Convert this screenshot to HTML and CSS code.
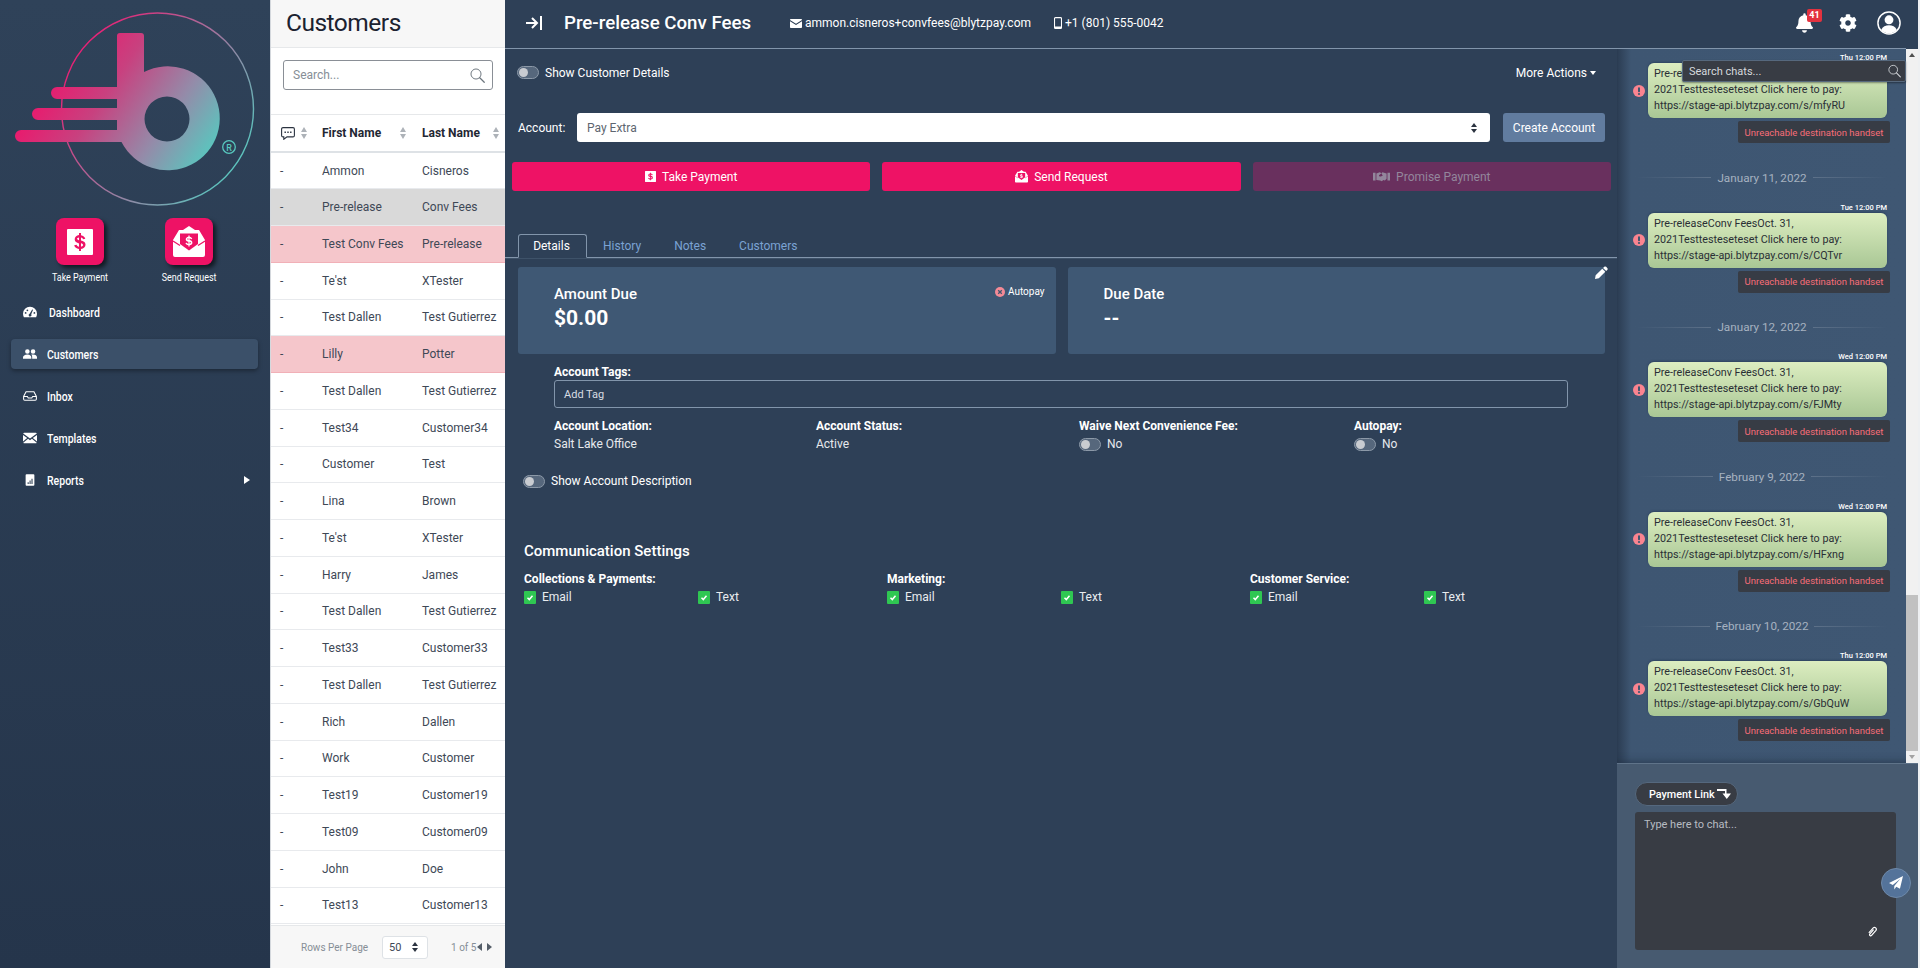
FILE: index.html
```html
<!DOCTYPE html>
<html lang="en">
<head>
<meta charset="utf-8">
<title>Customers</title>
<link rel="stylesheet" href="styles.css">
</head>
<body>
<svg class="defs" width="0" height="0" aria-hidden="true">
  <defs>
    <linearGradient id="logoFill" gradientUnits="userSpaceOnUse" x1="50" y1="60" x2="205" y2="165">
      <stop offset="0" stop-color="#f0126a"/><stop offset=".35" stop-color="#c8417f"/><stop offset=".7" stop-color="#948ba9"/><stop offset="1" stop-color="#58c8bf"/>
    </linearGradient>
    <linearGradient id="logoRing" gradientUnits="userSpaceOnUse" x1="70" y1="50" x2="240" y2="170">
      <stop offset="0" stop-color="#ee1a72"/><stop offset=".5" stop-color="#a5709b"/><stop offset="1" stop-color="#58c8bf"/>
    </linearGradient>
    <symbol id="i-dollar" viewBox="0 0 26 26">
      <path fill="currentColor" fill-rule="evenodd" d="M1 0h24a1 1 0 0 1 1 1v24a1 1 0 0 1-1 1H1a1 1 0 0 1-1-1V1a1 1 0 0 1 1-1zm11 4v2.100c-2.600.4-4.300 2-4.300 4.200 0 2.600 2 3.500 4.300 4.100v3.300c-1.200-.2-2.100-.9-2.400-2l-2.400.6c.5 2 2.300 3.400 4.800 3.700V22h2v-2c2.700-.3 4.500-1.900 4.500-4.200 0-2.800-2.200-3.700-4.500-4.300V8.500c1 .2 1.700.8 2 1.800l2.300-.6c-.5-1.800-2.100-3.200-4.300-3.500V4h-2zm0 4.500v2.800c-1.200-.4-1.900-.8-1.900-1.500 0-.6.7-1.100 1.900-1.300zm2 5.700c1.300.4 2.100.9 2.100 1.700 0 .8-.8 1.400-2.100 1.600v-3.300z"/>
    </symbol>
    <symbol id="i-envdollar" viewBox="0 0 32 32">
      <path fill="currentColor" d="M16 0l6 4h4l3 5 3 5v15a2 2 0 0 1-2 2H2a2 2 0 0 1-2-2V14l3-5 3-5h4z"/>
      <path fill="#ee1265" d="M7 7.500h18V18l-9 6.500L7 18z"/>
      <path fill="none" stroke="#ee1265" stroke-width="1.200" d="M0 15l7 4.500M32 15l-7 4.500"/>
      <path fill="currentColor" fill-rule="evenodd" transform="translate(7.940 6.940) scale(.62)" d="M12 4v2.100c-2.600.4-4.300 2-4.300 4.200 0 2.600 2 3.500 4.300 4.100v3.300c-1.200-.2-2.100-.9-2.400-2l-2.400.6c.5 2 2.300 3.400 4.800 3.700V22h2v-2c2.700-.3 4.500-1.900 4.500-4.200 0-2.800-2.200-3.700-4.500-4.300V8.500c1 .2 1.700.8 2 1.800l2.300-.6c-.5-1.800-2.100-3.200-4.300-3.500V4h-2zm0 4.500v2.800c-1.200-.4-1.900-.8-1.900-1.500 0-.6.7-1.100 1.900-1.300zm2 5.700c1.300.4 2.100.9 2.100 1.700 0 .8-.8 1.400-2.100 1.600v-3.300z"/>
    </symbol>
    <symbol id="i-search" viewBox="0 0 20 20">
      <circle cx="8" cy="8" r="6.700" fill="none" stroke="currentColor" stroke-width="1.300"/>
      <path d="M13 13l6 6" stroke="currentColor" stroke-width="1.600" stroke-linecap="round"/>
    </symbol>
    <symbol id="i-alert" viewBox="0 0 12 12">
      <circle cx="6" cy="6" r="6" fill="#fb8490"/>
      <rect x="5" y="2.300" width="2" height="5" rx="1" fill="#3f566f"/>
      <circle cx="6" cy="9" r="1.100" fill="#3f566f"/>
    </symbol>
    <symbol id="i-handshake" viewBox="0 0 20 14">
      <path fill="currentColor" d="M0 2h3v9H0zM17 2h3v9h-3zM4 3l4-1.500 2 1-3 2.500c0 1.500 1.500 2 3 1l2-1.500 4 4.500-2 2-2-.5-1.500 1.500-2-1L4 10.500zM11 1.500l5 1.500v6l-1 .5-4-5-1-2z"/>
    </symbol>
    <symbol id="i-check" viewBox="0 0 12 13">
      <rect width="12" height="13" rx="1" fill="#2fc752"/>
      <path d="M3.500 6.800l1.800 1.800 3.200-3.800" fill="none" stroke="#fff" stroke-width="1.500"/>
    </symbol>
  </defs>
</svg>

<div class="app">
  <aside class="sidebar">
    <svg class="logo" viewBox="0 0 270 215" width="270" height="215" role="img" aria-label="Blytzpay logo">
      <circle cx="157.500" cy="109" r="96" fill="none" stroke="url(#logoRing)" stroke-width="1.400"/>
      <path fill="url(#logoFill)" fill-rule="evenodd" d="M120 33h21a3 3 0 0 1 3 3v36a52 52 0 1 1-22.500 70H21a6 6 0 0 1 0-12h96v-10H38a6 6 0 0 1 0-12h79V99H57a6 6 0 0 1 0-12h60V36a3 3 0 0 1 3-3zM167 96.500a22.500 22.500 0 1 0 0 45 22.500 22.500 0 0 0 0-45z"/>
      <circle cx="229" cy="147" r="6.300" fill="none" stroke="#58c8bf" stroke-width="1.300"/>
      <text x="229" y="150.500" class="logo-r">R</text>
    </svg>
    <div class="quick">
      <a class="quick-item">
        <span class="tile"><svg class="tile-icon" width="26" height="26"><use href="#i-dollar"/></svg></span>
        <span class="quick-label">Take Payment</span>
      </a>
      <a class="quick-item">
        <span class="tile"><svg class="tile-icon" width="32" height="32"><use href="#i-envdollar"/></svg></span>
        <span class="quick-label">Send Request</span>
      </a>
    </div>
    <nav class="nav">
      <a class="nav-item">
        <svg class="nav-icon" viewBox="0 0 16 12"><path fill="currentColor" fill-rule="evenodd" d="M8 0a8 8 0 0 1 8 8c0 1.500-.4 2.800-1 4H1C.4 10.800 0 9.500 0 8a8 8 0 0 1 8-8zm2.500 3L7.600 8a1.600 1.600 0 1 0 1.800.6L11.500 3.500zM3 6a1 1 0 1 0 0 2 1 1 0 0 0 0-2zm2-3a1 1 0 1 0 0 2 1 1 0 0 0 0-2zm8 3a1 1 0 1 0 0 2 1 1 0 0 0 0-2z"/></svg>
        <span class="nav-text first">Dashboard</span>
      </a>
      <a class="nav-item active">
        <svg class="nav-icon" viewBox="0 0 16 11"><path fill="currentColor" d="M5 0a2.600 2.600 0 1 1 0 5.200A2.600 2.600 0 0 1 5 0zm6.500 0a2.600 2.600 0 1 1 0 5.200 2.600 2.600 0 0 1 0-5.200zM0 9.500C0 7.500 2 6 5 6s4.500 1.500 4.500 3.500V11H0zM10.500 11V9c0-1.200-.4-2.100-1-2.800.6-.2 1.300-.2 2-.2 2.700 0 4.500 1.400 4.500 3.300V11z"/></svg>
        <span class="nav-text">Customers</span>
      </a>
      <a class="nav-item">
        <svg class="nav-icon" viewBox="0 0 16 11"><path fill="none" stroke="currentColor" stroke-width="1.200" d="M3.500.7h9L15.300 6v3a1.300 1.300 0 0 1-1.300 1.300H2A1.300 1.300 0 0 1 .7 9V6zM.7 6h4.300l1 1.700h4L11 6h4.300"/></svg>
        <span class="nav-text">Inbox</span>
      </a>
      <a class="nav-item">
        <svg class="nav-icon" viewBox="0 0 16 12"><path fill="currentColor" d="M1.500 0h13c.6 0 1.100.3 1.300.8L8 6.500.2.800C.4.300.9 0 1.500 0zM0 2.500l4.800 3.600L0 10zM16 2.500V10l-4.800-3.900zM5.800 6.900 8 8.500l2.200-1.600 5.500 4.500c-.3.400-.7.600-1.200.6h-13c-.5 0-.9-.2-1.200-.6z"/></svg>
        <span class="nav-text">Templates</span>
      </a>
      <a class="nav-item">
        <svg class="nav-icon" viewBox="0 0 16 13"><path fill="currentColor" fill-rule="evenodd" d="M4 0h8a1 1 0 0 1 1 1v11a1 1 0 0 1-1 1H4a1 1 0 0 1-1-1V1a1 1 0 0 1 1-1zm1.300 9v2h1.200V9zm2.200-2v4h1.200V7zm2.200-2v6h1.200V5z"/></svg>
        <span class="nav-text">Reports</span>
        <span class="nav-arrow"></span>
      </a>
    </nav>
  </aside>

  <section class="list">
    <h1 class="list-title">Customers</h1>
    <div class="list-search">
      <div class="search-box">
        <span class="search-ph">Search...</span>
        <svg class="search-ico" width="15" height="15"><use href="#i-search"/></svg>
      </div>
    </div>
    <table class="cust">
      <thead>
        <tr>
          <th class="c-msg">
            <div class="th-in">
              <svg class="msg-ico" viewBox="0 0 14 13"><path fill="none" stroke="currentColor" stroke-width="1.100" d="M2 .6h10A1.400 1.400 0 0 1 13.400 2v6.500A1.400 1.400 0 0 1 12 9.900H6L2.800 12.300V9.900H2A1.400 1.400 0 0 1 .6 8.500V2A1.400 1.400 0 0 1 2 .6z"/><path fill="currentColor" d="M3.500 4.500h1.400v1.400H3.500zM6.300 4.500h1.400v1.400H6.300zM9.100 4.500h1.400v1.400H9.100z"/></svg>
              <span class="sort"></span>
            </div>
          </th>
          <th class="c-first"><div class="th-in"><span>First Name</span><span class="sort"></span></div></th>
          <th class="c-last"><div class="th-in"><span>Last Name</span><span class="sort"></span></div></th>
        </tr>
      </thead>
      <tbody>
        <tr><td>-</td><td>Ammon</td><td>Cisneros</td></tr>
        <tr class="sel"><td>-</td><td>Pre-release</td><td>Conv Fees</td></tr>
        <tr class="warn"><td>-</td><td>Test Conv Fees</td><td>Pre-release</td></tr>
        <tr><td>-</td><td>Te'st</td><td>XTester</td></tr>
        <tr><td>-</td><td>Test Dallen</td><td>Test Gutierrez</td></tr>
        <tr class="warn"><td>-</td><td>Lilly</td><td>Potter</td></tr>
        <tr><td>-</td><td>Test Dallen</td><td>Test Gutierrez</td></tr>
        <tr><td>-</td><td>Test34</td><td>Customer34</td></tr>
        <tr><td>-</td><td>Customer</td><td>Test</td></tr>
        <tr><td>-</td><td>Lina</td><td>Brown</td></tr>
        <tr><td>-</td><td>Te'st</td><td>XTester</td></tr>
        <tr><td>-</td><td>Harry</td><td>James</td></tr>
        <tr><td>-</td><td>Test Dallen</td><td>Test Gutierrez</td></tr>
        <tr><td>-</td><td>Test33</td><td>Customer33</td></tr>
        <tr><td>-</td><td>Test Dallen</td><td>Test Gutierrez</td></tr>
        <tr><td>-</td><td>Rich</td><td>Dallen</td></tr>
        <tr><td>-</td><td>Work</td><td>Customer</td></tr>
        <tr><td>-</td><td>Test19</td><td>Customer19</td></tr>
        <tr><td>-</td><td>Test09</td><td>Customer09</td></tr>
        <tr><td>-</td><td>John</td><td>Doe</td></tr>
        <tr><td>-</td><td>Test13</td><td>Customer13</td></tr>
      </tbody>
    </table>
    <footer class="pager">
      <span class="pager-label">Rows Per Page</span>
      <span class="pager-select"><span>50</span><span class="updown dark"></span></span>
      <span class="pager-count">1 of 5</span>
      <span class="tri-l"></span>
      <span class="tri-r"></span>
    </footer>
  </section>

  <div class="right">
    <header class="topbar">
      <svg class="collapse" viewBox="0 0 16 14" width="16" height="14"><path fill="none" stroke="#fff" stroke-width="2" d="M0 7h10M6 2l5 5-5 5M15 0v14"/></svg>
      <h2 class="customer-name">Pre-release Conv Fees</h2>
      <span class="contact">
        <svg class="contact-ico" viewBox="0 0 12 9" width="12" height="9"><path fill="#fff" d="M1 0h10c.5 0 1 .4 1 1L6 4.800 0 1c0-.6.500-1 1-1zM0 2.300l6 3.800 6-3.800V8c0 .6-.5 1-1 1H1c-.5 0-1-.4-1-1z"/></svg>ammon.cisneros+convfees@blytzpay.com
      </span>
      <span class="contact phone">
        <svg class="contact-ico" viewBox="0 0 8 12" width="8" height="12"><path fill="none" stroke="#fff" stroke-width="1.100" d="M1.500.6h5a1 1 0 0 1 1 1v8.800a1 1 0 0 1-1 1h-5a1 1 0 0 1-1-1V1.600a1 1 0 0 1 1-1z"/><path fill="#fff" d="M.5 9.500h7v1.300a1 1 0 0 1-1 1h-5a1 1 0 0 1-1-1z"/></svg>+1 (801) 555-0042
      </span>
      <div class="top-icons">
        <span class="bell">
          <svg viewBox="0 0 448 512" width="17" height="20"><path fill="#fff" d="M224 512c35 0 64-29 64-64H160c0 35 29 64 64 64zm215-150c-19-21-55-52-55-154 0-78-54-140-128-155V32a32 32 0 1 0-64 0v21C118 68 64 130 64 208c0 102-36 133-55 154-6 6-9 14-9 22 0 16 13 32 32 32h384c19 0 32-16 32-32 0-8-3-16-9-22z"/></svg>
          <span class="badge">41</span>
        </span>
        <svg class="gear" viewBox="0 0 512 512" width="18" height="18"><path fill="#fff" d="M487.400 315.700l-42.600-24.600c4.300-23.200 4.300-47 0-70.200l42.600-24.600c4.900-2.800 7.100-8.600 5.500-14-11.100-35.600-30-67.800-54.700-94.600-3.800-4.100-10-5.100-14.800-2.300L380.800 110c-17.900-15.400-38.500-27.300-60.800-35.100V25.800c0-5.600-3.900-10.500-9.400-11.700-36.700-8.200-74.300-7.800-109.200 0-5.500 1.200-9.400 6.100-9.400 11.700V75c-22.200 7.900-42.800 19.800-60.800 35.100L88.700 85.500c-4.900-2.800-11-1.900-14.800 2.300-24.700 26.700-43.600 58.900-54.700 94.600-1.700 5.400.6 11.200 5.500 14L67.300 221c-4.300 23.200-4.300 47 0 70.200l-42.600 24.600c-4.900 2.800-7.100 8.600-5.500 14 11.100 35.600 30 67.800 54.700 94.600 3.800 4.100 10 5.100 14.800 2.300l42.600-24.600c17.900 15.400 38.500 27.300 60.800 35.100v49.200c0 5.600 3.900 10.500 9.400 11.700 36.700 8.200 74.300 7.800 109.200 0 5.500-1.200 9.400-6.100 9.400-11.700v-49.200c22.200-7.900 42.800-19.800 60.800-35.100l42.600 24.600c4.900 2.800 11 1.900 14.800-2.300 24.700-26.700 43.600-58.900 54.700-94.600 1.500-5.500-.7-11.300-5.600-14.100zM256 336c-44.100 0-80-35.900-80-80s35.900-80 80-80 80 35.900 80 80-35.900 80-80 80z"/></svg>
        <svg class="profile" viewBox="0 0 26 26" width="24" height="24"><circle cx="13" cy="13" r="12" fill="none" stroke="#fff" stroke-width="1.600"/><circle cx="13" cy="9.500" r="4.800" fill="#fff"/><path fill="#fff" d="M4.500 20.500c1.500-3.500 5-5 8.500-5s7 1.500 8.500 5A11.500 11.500 0 0 1 4.500 20.500z"/></svg>
      </div>
    </header>

    <div class="workspace">
      <main class="main">
        <div class="row-toggle">
          <span class="toggle"></span>
          <span class="toggle-label">Show Customer Details</span>
          <span class="more">More Actions<span class="caret"></span></span>
        </div>
        <div class="account-row">
          <span class="account-label">Account:</span>
          <div class="account-select"><span>Pay Extra</span><span class="updown dark"></span></div>
          <span class="create-btn">Create Account</span>
        </div>
        <div class="actions">
          <span class="btn"><svg width="11" height="11"><use href="#i-dollar"/></svg>Take Payment</span>
          <span class="btn"><svg width="13" height="13"><use href="#i-envdollar"/></svg>Send Request</span>
          <span class="btn off"><svg width="17" height="12"><use href="#i-handshake"/></svg>Promise Payment</span>
        </div>
        <div class="tabs">
          <span class="tab current">Details</span>
          <span class="tab">History</span>
          <span class="tab">Notes</span>
          <span class="tab">Customers</span>
        </div>
        <div class="cards">
          <div class="card">
            <div class="card-label">Amount Due</div>
            <div class="card-value">$0.00</div>
            <div class="autopay">
              <svg viewBox="0 0 10 10" width="10" height="10"><circle cx="5" cy="5" r="5" fill="#f58a96"/><path d="M3.200 3.200l3.600 3.600M6.800 3.200L3.200 6.800" stroke="#3f566f" stroke-width="1.300"/></svg>
              <span>Autopay</span>
            </div>
          </div>
          <div class="card">
            <div class="card-label">Due Date</div>
            <div class="card-value">--</div>
          </div>
          <svg class="pencil" viewBox="0 0 12 12" width="13" height="13"><path fill="#fff" d="M8.500.8a1.300 1.300 0 0 1 1.800 0l1 1a1.300 1.300 0 0 1 0 1.800l-1 1-2.800-2.800zM6.700 2.600l2.800 2.800-6 6L0 12l.6-3.500z"/></svg>
        </div>
        <div class="detail">
          <label class="field-label">Account Tags:</label>
          <div class="tag-input">Add Tag</div>
          <div class="facts">
            <div class="fact f1"><div class="field-label">Account Location:</div><div class="fact-val">Salt Lake Office</div></div>
            <div class="fact f2"><div class="field-label">Account Status:</div><div class="fact-val">Active</div></div>
            <div class="fact f3"><div class="field-label">Waive Next Convenience Fee:</div><div class="fact-val"><span class="toggle"></span><span>No</span></div></div>
            <div class="fact f4"><div class="field-label">Autopay:</div><div class="fact-val"><span class="toggle"></span><span>No</span></div></div>
          </div>
        </div>
        <div class="desc-row"><span class="toggle"></span><span class="toggle-label">Show Account Description</span></div>
        <section class="comm">
          <h3 class="comm-title">Communication Settings</h3>
          <div class="comm-grid">
            <div class="comm-col">
              <div class="field-label">Collections &amp; Payments:</div>
              <div class="checks">
                <span class="chk"><svg width="12" height="13"><use href="#i-check"/></svg>Email</span>
                <span class="chk"><svg width="12" height="13"><use href="#i-check"/></svg>Text</span>
              </div>
            </div>
            <div class="comm-col">
              <div class="field-label">Marketing:</div>
              <div class="checks">
                <span class="chk"><svg width="12" height="13"><use href="#i-check"/></svg>Email</span>
                <span class="chk"><svg width="12" height="13"><use href="#i-check"/></svg>Text</span>
              </div>
            </div>
            <div class="comm-col">
              <div class="field-label">Customer Service:</div>
              <div class="checks">
                <span class="chk"><svg width="12" height="13"><use href="#i-check"/></svg>Email</span>
                <span class="chk"><svg width="12" height="13"><use href="#i-check"/></svg>Text</span>
              </div>
            </div>
          </div>
        </section>
      </main>

      <aside class="chat">
        <div class="chat-top">
          <div class="messages">
            <div class="msg-group">
              <div class="stamp">Thu 12:00 PM</div>
              <div class="bubble-row"><svg class="alert" width="12" height="12"><use href="#i-alert"/></svg><div class="bubble">Pre-releaseConv FeesOct. 31, 2021Testtesteseteset Click here to pay: https://stage-api.blytzpay.com/s/mfyRU</div></div>
              <div class="err">Unreachable destination handset</div>
            </div>
            <div class="date-sep"><span>January 11, 2022</span></div>
            <div class="msg-group">
              <div class="stamp">Tue 12:00 PM</div>
              <div class="bubble-row"><svg class="alert" width="12" height="12"><use href="#i-alert"/></svg><div class="bubble">Pre-releaseConv FeesOct. 31, 2021Testtesteseteset Click here to pay: https://stage-api.blytzpay.com/s/CQTvr</div></div>
              <div class="err">Unreachable destination handset</div>
            </div>
            <div class="date-sep"><span>January 12, 2022</span></div>
            <div class="msg-group">
              <div class="stamp">Wed 12:00 PM</div>
              <div class="bubble-row"><svg class="alert" width="12" height="12"><use href="#i-alert"/></svg><div class="bubble">Pre-releaseConv FeesOct. 31, 2021Testtesteseteset Click here to pay: https://stage-api.blytzpay.com/s/FJMty</div></div>
              <div class="err">Unreachable destination handset</div>
            </div>
            <div class="date-sep"><span>February 9, 2022</span></div>
            <div class="msg-group">
              <div class="stamp">Wed 12:00 PM</div>
              <div class="bubble-row"><svg class="alert" width="12" height="12"><use href="#i-alert"/></svg><div class="bubble">Pre-releaseConv FeesOct. 31, 2021Testtesteseteset Click here to pay: https://stage-api.blytzpay.com/s/HFxng</div></div>
              <div class="err">Unreachable destination handset</div>
            </div>
            <div class="date-sep"><span>February 10, 2022</span></div>
            <div class="msg-group">
              <div class="stamp">Thu 12:00 PM</div>
              <div class="bubble-row"><svg class="alert" width="12" height="12"><use href="#i-alert"/></svg><div class="bubble">Pre-releaseConv FeesOct. 31, 2021Testtesteseteset Click here to pay: https://stage-api.blytzpay.com/s/GbQuW</div></div>
              <div class="err">Unreachable destination handset</div>
            </div>
          </div>
          <div class="scrollbar">
            <span class="sb-up"></span>
            <span class="sb-track"><span class="sb-thumb"></span></span>
            <span class="sb-down"></span>
          </div>
          <div class="chat-search">
            <span>Search chats...</span>
            <svg width="13" height="14"><use href="#i-search"/></svg>
          </div>
        </div>
        <div class="composer">
          <span class="pay-link">Payment Link
            <svg viewBox="0 0 14 10" width="14" height="10"><path fill="#fff" d="M0 0h9.500v4.500H14L9.800 10 5.500 4.500H8V2H0z"/></svg>
          </span>
          <div class="chat-input">
            <span>Type here to chat...</span>
            <svg class="clip" viewBox="0 0 12 12" width="11" height="11"><path fill="none" stroke="#fff" stroke-width="1.300" d="M2 7.500l4.800-5.400a2 2 0 0 1 3 2.600L5 10.200a1.200 1.200 0 0 1-1.800-1.600l4-4.600"/></svg>
          </div>
          <span class="send">
            <svg viewBox="0 0 16 16" width="14" height="14"><path fill="#fff" d="M16 0L12.500 14.500 8.300 12.300 6 15.500V11.500L13 3 4.300 10.300 0 8z"/></svg>
          </span>
        </div>
      </aside>
    </div>
  </div>
</div>
</body>
</html>
```

FILE: styles.css
```css
* { box-sizing: border-box; }
html, body { margin: 0; height: 100%; }
body {
  font-family: Roboto, "Liberation Sans", sans-serif;
  font-size: 12px;
  color: #fff;
  background: #eef0f2;
  overflow: hidden;
}
.defs { position: absolute; }
.app { display: flex; height: 968px; width: 1920px; }

/* sidebar */
.sidebar {
  width: 270px;
  flex: none;
  background: linear-gradient(180deg, #2f4259 0%, #25354b 100%);
  display: flex;
  flex-direction: column;
}
.logo { display: block; }
.logo-r { font-size: 9px; fill: #58c8bf; text-anchor: middle; font-weight: 500; }
.quick { display: flex; margin-top: 3px; padding-left: 39px; gap: 27px; }
.quick-item { width: 82px; display: flex; flex-direction: column; align-items: center; }
.tile {
  width: 48px; height: 47px;
  background: #ee1265;
  border-radius: 8px;
  box-shadow: 3px 3px 4px rgba(0,0,0,.6);
  display: flex; align-items: center; justify-content: center;
  color: #fff;
}
.tile-icon { display: block; }
.quick-label { display: inline-block; margin-top: 6px; font-size: 10.5px; line-height: 14px; white-space: nowrap; transform: scaleX(.85); }
.nav { margin-top: 6px; padding: 0 12px 0 11px; display: flex; flex-direction: column; }
.nav-item {
  height: 30px; margin: 6px 0;
  display: flex; align-items: center;
  padding-left: 12px;
  border-radius: 4px;
  position: relative;
}
.nav-item.active { background: #3b5069; box-shadow: 0 2px 4px rgba(0,0,0,.35); }
.nav-icon { width: 14px; height: 12px; color: #fff; flex: none; }
.nav-text { display: inline-block; margin-left: 10px; font-size: 12.5px; font-weight: 500; transform: scaleX(.84); transform-origin: left center; }
.nav-text.first { margin-left: 12px; }
.nav-arrow {
  margin-left: auto; margin-right: 8px;
  border-left: 6px solid #fff;
  border-top: 4.500px solid transparent;
  border-bottom: 4.500px solid transparent;
}

/* list */
.list {
  width: 235px; flex: none;
  background: #fff;
  color: #3e4856;
  display: flex; flex-direction: column;
  border-left: 1px solid #d4d8dd;
}
.list-title {
  margin: 0;
  height: 48px;
  line-height: 46px;
  padding-left: 15px;
  font-size: 24.500px;
  letter-spacing: -.5px;
  font-weight: 400;
  color: #1b2230;
  background: #f7f7f7;
  border-bottom: 1px solid #e6e8ea;
}
.list-search { height: 67px; padding: 12px 12px 0 12px; border-bottom: 1px solid #e6e8ea; }
.search-box {
  height: 30px;
  border: 1px solid #8a8f96;
  border-radius: 3px;
  display: flex; align-items: center; justify-content: space-between;
  padding: 0 7px 0 9px;
}
.search-ph { color: #868e96; font-size: 12px; }
.search-ico { color: #6c757d; }
.cust { width: 234px; border-collapse: collapse; table-layout: fixed; }
.cust th {
  height: 37px;
  padding: 0;
  text-align: left;
  font-size: 12px;
  font-weight: 700;
  color: #1f2733;
  border-bottom: 2px solid #dee2e6;
}
.c-msg { width: 51px; }
.c-first { width: 100px; }
.th-in { display: flex; align-items: center; justify-content: space-between; }
.c-first .th-in { padding-right: 15px; }
.c-last .th-in { padding-right: 5px; }
.c-msg .th-in { padding-left: 10px; padding-right: 14px; }
.msg-ico { width: 14px; height: 13px; color: #2b3340; }
.sort { width: 7px; height: 12px; display: inline-block; position: relative; }
.sort::before, .sort::after {
  content: ""; position: absolute; left: 0;
  border-left: 3.500px solid transparent;
  border-right: 3.500px solid transparent;
}
.sort::before { top: 0; border-bottom: 5px solid #adb2b8; }
.sort::after { bottom: 0; border-top: 5px solid #adb2b8; }
.cust td {
  height: 36.750px;
  padding: 0;
  font-size: 12px;
  color: #3e4856;
  border-bottom: 1px solid #e8eaed;
  white-space: nowrap;
}
.cust td:first-child { padding-left: 9px; }
.cust tr.sel td { background: #d9d9d9; }
.cust tr.warn td { background: #f5c6cb; border-color: #f1b0b7; }
.pager {
  margin-top: auto;
  height: 43px;
  background: #f7f7f7;
  border-top: 1px solid #e6e8ea;
  display: flex; align-items: center;
  padding-left: 30px;
  color: #868e96;
  font-size: 10px;
}
.pager-select {
  margin-left: 14px;
  width: 46px; height: 23px;
  border: 1px solid #dee2e6; border-radius: 3px;
  background: #fff;
  display: flex; align-items: center; justify-content: space-between;
  padding: 0 9px 0 6px;
  color: #3e4856; font-size: 11px;
}
.pager-count { margin-left: 23px; }
.tri-l, .tri-r { width: 0; height: 0; border-top: 4px solid transparent; border-bottom: 4px solid transparent; }
.tri-l { margin-left: 1px; border-right: 5px solid #555e69; }
.tri-r { margin-left: 5px; border-left: 5px solid #555e69; }
.updown { width: 6px; height: 10px; position: relative; display: inline-block; }
.updown::before, .updown::after {
  content: ""; position: absolute; left: 0;
  border-left: 3px solid transparent; border-right: 3px solid transparent;
}
.updown::before { top: 0; border-bottom: 4px solid #2b3340; }
.updown::after { bottom: 0; border-top: 4px solid #2b3340; }

/* right */
.right { width: 1413px; flex: none; display: flex; flex-direction: column; background: #2e4057; }
.topbar {
  height: 49px; flex: none;
  display: flex; align-items: center;
  padding: 0 18px 2px 21px;
  border-bottom: 1px solid #8295ab;
  width: 1401px;
}
.customer-name { margin: 0 0 0 22px; font-size: 18.700px; font-weight: 500; width: 226px; white-space: nowrap; }
.contact { font-size: 12px; display: inline-flex; align-items: center; gap: 3px; white-space: nowrap; }
.phone { margin-left: 23px; }
.top-icons { margin-left: auto; display: flex; align-items: center; margin-right: -13px; }
.gear { margin-left: 26px; }
.profile { margin-left: 20px; }
.bell { position: relative; display: block; height: 20px; }
.bell svg { display: block; }
.badge {
  position: absolute; left: 11px; top: -4px;
  width: 15px; height: 13px;
  background: #e3323f; border-radius: 2px;
  font-size: 9px; font-weight: 700; line-height: 13px; text-align: center;
}
.workspace { flex: 1; display: flex; min-height: 0; }
.main { width: 1112px; flex: none; padding-top: 15px; position: relative; }
.row-toggle { display: flex; align-items: center; height: 17px; padding: 0 21px 0 12px; }
.toggle {
  width: 22px; height: 13px; flex: none;
  border-radius: 7px;
  background: #56677c;
  border: 1px solid #8c99a8;
  position: relative;
  display: inline-block;
}
.toggle::after {
  content: ""; position: absolute; left: 1px; top: 1px;
  width: 9px; height: 9px; border-radius: 50%;
  background: #c9ccd1;
}
.toggle-label { margin-left: 6px; font-size: 12px; }
.more { margin-left: auto; display: inline-flex; align-items: center; font-size: 12px; font-weight: 400; }
.caret {
  margin-left: 3px;
  border-top: 4px solid #fff;
  border-left: 3.500px solid transparent;
  border-right: 3.500px solid transparent;
}
.account-row { display: flex; align-items: center; margin-top: 32px; padding: 0 12px 0 13px; height: 29px; }
.account-label { width: 59px; font-size: 12px; }
.account-select {
  width: 913px; height: 29px;
  background: #fff; border-radius: 3px;
  color: #5d6670; font-size: 12px;
  display: flex; align-items: center; justify-content: space-between;
  padding: 0 13px 0 10px;
}
.create-btn {
  margin-left: 13px; width: 102px; height: 29px;
  background: #617c9f; border-radius: 3px;
  display: flex; align-items: center; justify-content: center;
  font-size: 12px;
}
.actions { display: flex; gap: 12px; margin-top: 20px; padding: 0 6px 0 7px; }
.btn {
  flex: 1; height: 29px;
  background: #ee1265; border-radius: 3px;
  display: flex; align-items: center; justify-content: center; gap: 6px;
  font-size: 12px;
}
.btn.off { background: #69305e; color: #93869c; }
.tabs { display: flex; margin-top: 43px; height: 24px; padding-left: 13px; border-bottom: 1px solid #8295ab; box-shadow: 0 1px 0 #3e5269; }
.tab {
  height: 24px; padding: 0 16.500px;
  display: flex; align-items: center;
  color: #7ba3d4; font-size: 12px;
}
.tab.current {
  color: #fff; width: 69px; justify-content: center; padding: 0 2px 0 0; margin-right: -.5px;
  border: 1px solid #8295ab; border-bottom: 1px solid #2e4057; border-radius: 3px 3px 0 0;
}
.cards { display: flex; gap: 12px; margin: 9px 12px 0 13px; position: relative; }
.card {
  flex: 1; height: 87px;
  background: #3f5874; border-radius: 3px;
  padding: 18px 0 0 36px;
  position: relative;
}
.card-label { font-size: 15px; font-weight: 500; line-height: 18px; }
.card-value { margin-top: 2px; font-size: 21px; font-weight: 700; line-height: 26px; }
.card:last-of-type .card-value { font-size: 20px; }
.autopay {
  position: absolute; top: 19px; right: 11px;
  display: flex; align-items: center; gap: 3px;
  font-size: 10px;
}
.pencil { position: absolute; right: -3px; top: -1px; }
.detail { padding: 11px 49px 0 49px; }
.field-label { font-size: 12px; font-weight: 700; line-height: 14px; display: block; }
.tag-input {
  margin-top: 1px;
  height: 28px;
  border: 1px solid #8295ab; border-radius: 3px;
  display: flex; align-items: center; padding-left: 9px;
  color: #d8dde3; font-size: 11px;
}
.facts { display: flex; margin-top: 11px; }
.f1 { width: 262px; }
.f2 { width: 263px; }
.f3 { width: 275px; }
.fact-val { margin-top: 4px; height: 14px; font-size: 12px; line-height: 14px; display: flex; align-items: center; gap: 6px; color: #e6e9ed; }
.desc-row { display: flex; align-items: center; height: 16px; margin: 22px 0 0 18px; }
.comm { padding: 52px 0 0 19px; }
.comm-title { margin: 0; font-size: 15px; font-weight: 500; line-height: 20px; }
.comm-grid { display: grid; grid-template-columns: 363px 363px 363px; margin-top: 11px; }
.checks { display: grid; grid-template-columns: 174px 1fr; margin-top: 4px; }
.chk { display: flex; align-items: center; gap: 6px; font-size: 12px; height: 14px; color: #e9ecef; }

/* chat */
.chat { flex: 1; display: flex; flex-direction: column; min-width: 0; }
.chat-top { flex: 1; display: flex; min-height: 0; position: relative; }
.messages {
  flex: 1; min-width: 0;
  overflow: hidden;
  display: flex; flex-direction: column; justify-content: flex-end;
  padding: 0 19px 22px 16px;
  background: linear-gradient(90deg, #2b3c52 0, #3e5672 14px, #3f5773 100%);
  box-shadow: inset 0 -10px 10px -10px rgba(30,45,65,.8);
}
.msg-group { flex: none; display: flex; flex-direction: column; }
.stamp { text-align: right; font-size: 7.500px; font-weight: 500; line-height: 11px; height: 11px; }
.bubble-row { display: flex; align-items: center; gap: 3px; }
.alert { flex: none; }
.bubble {
  width: 239px;
  height: 55px;
  padding: 3px 6px;
  background: linear-gradient(180deg, #dcedc0 0%, #a9c795 100%);
  border-radius: 6px;
  color: #2a2f35;
  font-size: 10.750px;
  line-height: 16px;
  box-shadow: 0 -1px 2px rgba(30,50,80,.5);
}
.err {
  align-self: flex-end;
  margin: 3px -3px 0 0;
  width: 152px; height: 22px;
  background: #373c45; border-radius: 2px;
  color: #f76d78;
  font-size: 9.500px;
  display: flex; align-items: center; justify-content: center;
  white-space: nowrap;
}
.date-sep {
  flex: none;
  height: 58.500px;
  padding-top: 11px;
  margin-left: 4px;
  display: flex; align-items: center; justify-content: center; gap: 6px;
  color: #a6b2c0;
  font-size: 11.700px;
}
.date-sep::before, .date-sep::after { content: ""; flex: 1; height: 1px; background: linear-gradient(90deg, transparent, #5d7189); }
.date-sep::after { background: linear-gradient(90deg, #5d7189, transparent); }
.scrollbar { width: 12px; flex: none; display: flex; flex-direction: column; background: #f1f1f1; }
.sb-up, .sb-down { height: 12px; flex: none; position: relative; }
.sb-up::after, .sb-down::after {
  content: ""; position: absolute; left: 3px; top: 4px;
  border-left: 3px solid transparent; border-right: 3px solid transparent;
}
.sb-up::after { border-bottom: 4px solid #505050; }
.sb-down::after { border-top: 4px solid #a3a3a3; }
.sb-track { flex: 1; display: flex; flex-direction: column; justify-content: flex-end; }
.sb-thumb { height: 156px; background: #c1c1c1; }
.chat-search {
  position: absolute; left: 65px; top: 11px;
  width: 224px; height: 22px;
  background: #383c44;
  border: 1px solid #56687d; border-radius: 2px;
  display: flex; align-items: center; justify-content: space-between;
  padding: 0 4px 0 6px;
  font-size: 11px; color: #d6d9dd;
  box-shadow: 0 1px 2px rgba(0,0,0,.4);
}
.composer {
  height: 205px; flex: none;
  background: #475a70;
  border-top: 1px solid #5f7389;
  position: relative;
  padding: 18px 22px 0 18px;
}
.pay-link {
  display: inline-flex; align-items: center; gap: 2px;
  height: 24px; padding: 0 6px 0 13px;
  background: #383c44;
  border: 1px solid #55687e;
  border-radius: 12px;
  font-size: 10.800px; font-weight: 500;
}
.chat-input {
  margin-top: 6px;
  height: 138px;
  background: #383c44; border-radius: 3px;
  padding: 6px 9px;
  color: #b7bbc2; font-size: 11px;
  position: relative;
}
.clip { position: absolute; right: 18px; bottom: 13px; }
.send {
  position: absolute; left: 264px; top: 104px;
  width: 30px; height: 30px;
  border-radius: 50%;
  background: #54739a;
  border: 1px solid #6d88a8;
  display: flex; align-items: center; justify-content: center;
}
```
